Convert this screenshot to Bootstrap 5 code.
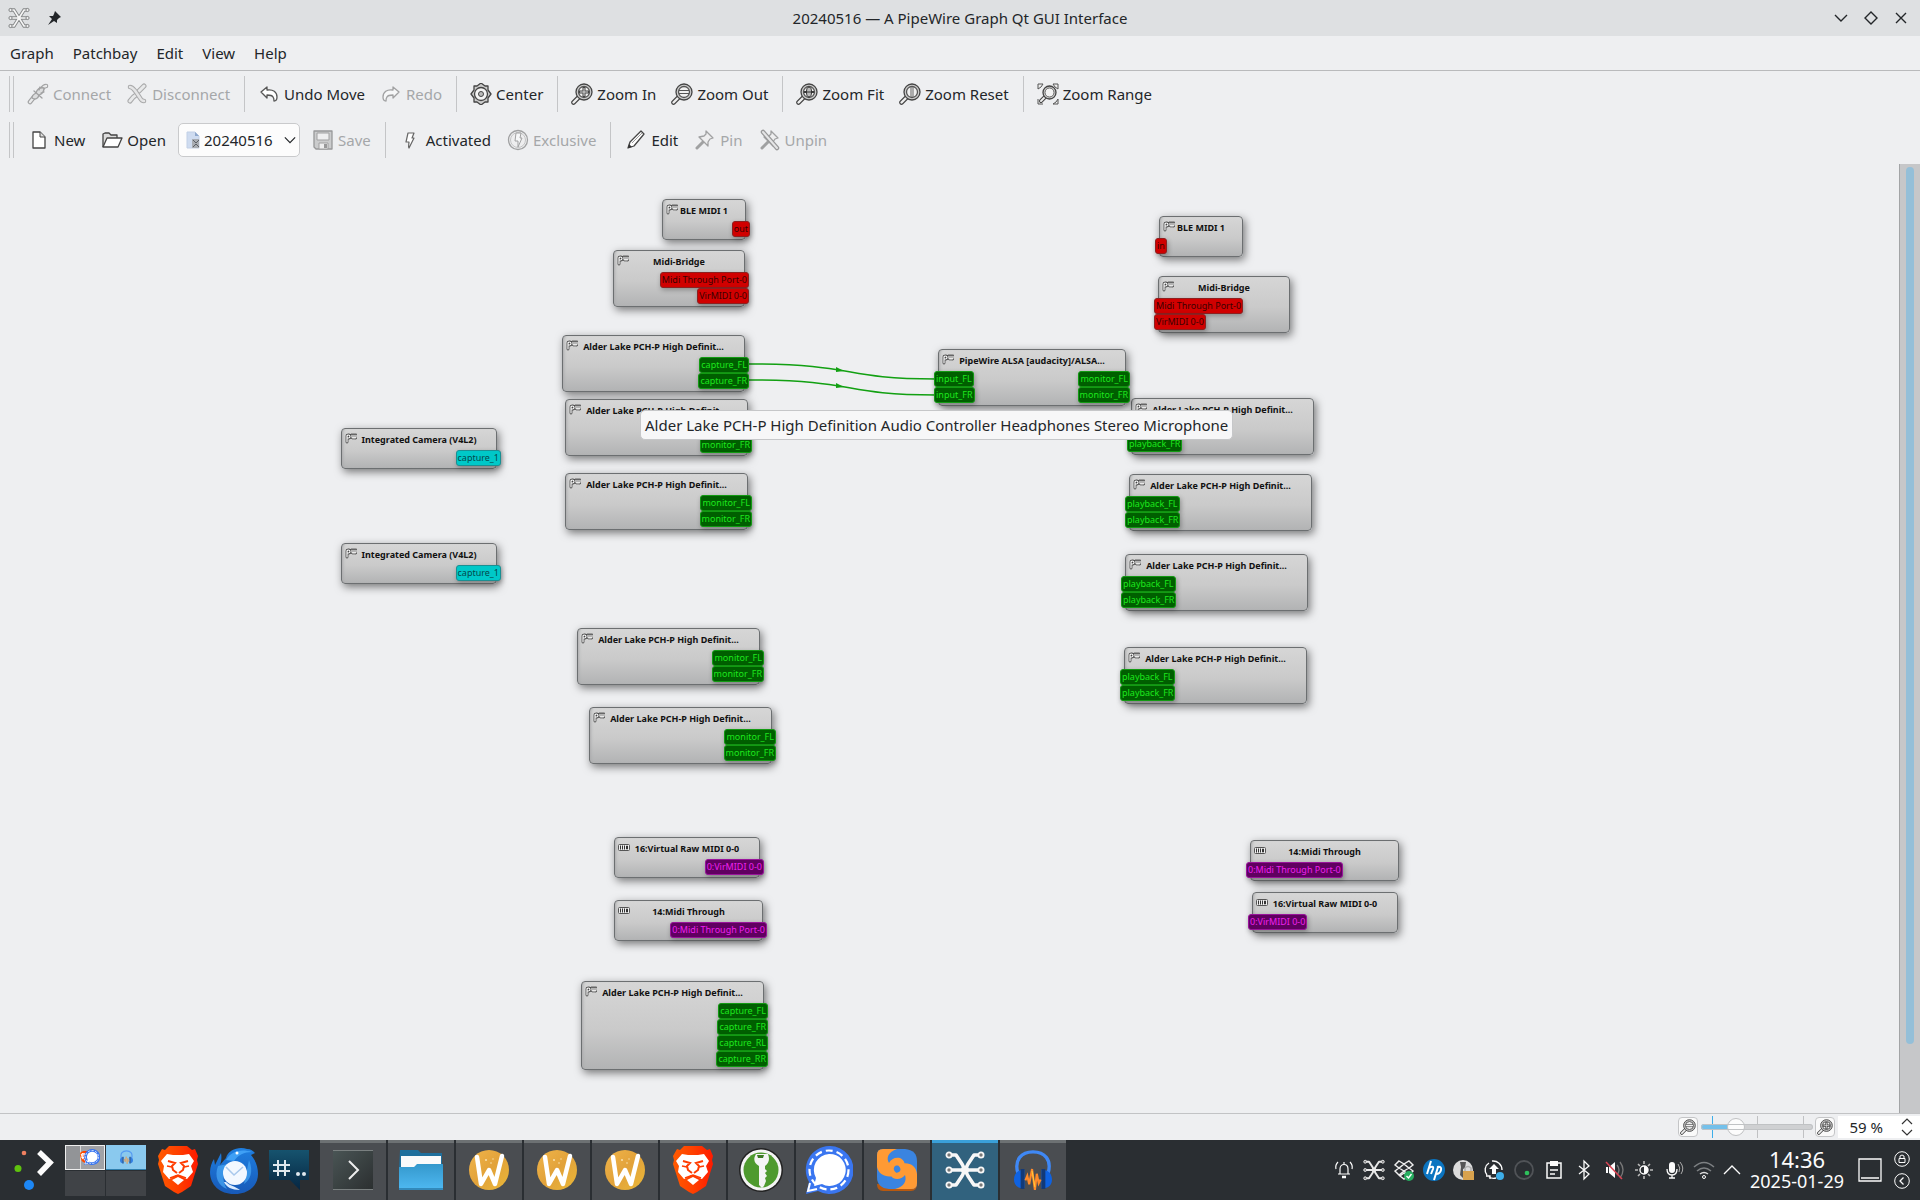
<!DOCTYPE html>
<html lang="en">
<head>
<meta charset="utf-8">
<meta name="viewport" content="width=device-width, initial-scale=1">
<title>20240516 — A PipeWire Graph Qt GUI Interface</title>
<link href="https://cdn.jsdelivr.net/npm/bootstrap@5.3.0/dist/css/bootstrap.min.css" rel="stylesheet">
<style>
:root{--win:#eeeff1;--ink:#232629;--dim:#a5a7a9;--line:#b9babc}
body{background:var(--win);color:var(--ink);font-family:"Noto Sans",sans-serif;font-size:15px;line-height:20px}
svg{display:block;flex:none}
.titlebar{background:#dee0e2;height:36px}
.winbtn{border:0;background:none;padding:0;width:30px;height:30px;display:grid;place-items:center;color:var(--ink)}
.menubar{height:35px;border-bottom:1px solid var(--line)}
.menubar a{color:var(--ink);text-decoration:none;padding:0 9px 0 10px}
.toolrow{height:45px;padding-left:9px}
.toolrow.patch{height:48px}
.grip{width:5px;height:36px;border:solid #c4c5c7;border-width:0 1px;margin-right:6px}
.vsep{width:1px;height:36px;background:#c4c5c7;margin:0 6px}
.tool{border:0;background:none;display:flex;align-items:center;gap:4px;padding:6px 8px 6px 7px;color:var(--ink);white-space:nowrap}
.patch .tool{padding-left:8px}
.tool:disabled{color:var(--dim)}
.tool:disabled svg{opacity:.5}
.combo{width:122px;margin:0 4px}
.combo select{appearance:none;width:100%;height:34px;border:1px solid #c9cacc;border-radius:5px;background:#fcfcfc;color:var(--ink);padding:0 4px 0 25px}
.combo .lead-ico{left:8px;top:8px}
.combo .drop-ico{right:4px;top:11px}
.canvas{overflow:hidden}
.wires{left:0;top:0;width:100%;height:100%}
.gnode{position:absolute;border:1px solid #6c6f71;border-radius:4px;background:linear-gradient(#d6d6d6,#cacaca 55%,#b2b3b4);box-shadow:inset 3px 0 3px -2px #aaabac,2px 3px 8px rgba(0,0,0,.5);padding-top:4px;font-size:9px;line-height:13px}
.gnode .gicon{position:absolute;left:3px;top:4px}
.gtitle{font-weight:700;text-align:center;white-space:nowrap;color:#111;margin-bottom:4px}
.gports{display:flex;justify-content:space-between;margin:0 -5px}
.gport{height:16px;line-height:14px;border:1px solid;border-radius:3px;padding:0 1px;white-space:nowrap;box-shadow:1px 2px 5px rgba(0,0,0,.3)}
.audio{background:#005f00;border-color:#139a13;color:#1ee61e}
.midi{background:#d00000;border-color:#8d2020;color:#3a0000}
.video{background:#00c8c8;border-color:#1b8f92;color:#04494c}
.alsa{background:#600060;border-color:#99149b;color:#ee22ee}
.tip{left:640px;top:246px;background:#f7f7f8;border:1px solid #c6c7c9;border-radius:5px;padding:4px;white-space:nowrap}
.vscroll{width:21px;background:#c6c7c9;border-left:1px solid #a2a4a6;padding:3px 6px}
.vthumb{width:8px;height:93%;border-radius:4px;background:#94bfd8}
.statusbar{height:27px;border-top:1px solid #c2c3c5}
.sqbtn{width:20px;height:20px;border:1px solid #c4c5c7;border-radius:4px;background:#fafafa;padding:0;display:grid;place-items:center}
.zoomer{width:112px;height:22px;margin:0 2px 0 3px}
.zoomer i{position:absolute;width:1px;top:0;height:22px;background:#c0c1c3}
.zoomer i:nth-child(1){left:10%;background:#3daee9}
.zoomer i:nth-child(2){left:50%}
.zoomer i:nth-child(3){left:91%}
.zoomer input{appearance:none;position:absolute;inset:0;width:100%;margin:0;background:none}
.zoomer input::-webkit-slider-runnable-track{height:6px;border-radius:3px;background:linear-gradient(90deg,#74c0ea 30%,#cfd0d2 30%);outline:1px solid #c0c2c4;outline-offset:-1px}
.zoomer input::-webkit-slider-thumb{appearance:none;width:18px;height:18px;border-radius:50%;margin-top:-6px;background:#fcfcfc;border:1px solid #c0c1c3}
.spin{width:82px;height:22px;background:#fff;margin-left:3px}
.spin input{width:63px;border:0;background:none;text-align:right;padding:0 18px 0 0;color:var(--ink)}
.taskbar{height:60px;background:#2a2e32;color:#fcfcfc}
.taskbar button{border:0;background:none;padding:0;color:inherit}
.starter{width:65px;height:60px}
.pager{width:81px;display:grid;grid-template-columns:40px 40px;gap:1px}
.pager span{height:25px;background:#404347;display:grid;place-items:center}
.pager .here{background:linear-gradient(90deg,#929497 14px,#d8d8d9 14px 15px,#a1a2a6 15px);border:1px solid #eee;justify-items:end;padding-right:4px}
.pager .busy{background:#8ac9ee;border-bottom:1px solid #2f7fae}
.pins button{display:grid;place-items:center;width:56px;height:60px}
.pins button:nth-child(3){width:54px}
.tasks{gap:2px}
.tasks button{width:66px;height:60px;background:#4a4d51;border-top:3px solid #6d7173;padding-bottom:3px;display:grid;place-items:center}
.tasks button.now{background:#31627e;border-top-color:#3aa0d9}
.tray{gap:8px}
.clock{line-height:22px;width:104px}
.clock .hour{font-size:22px}
.clock .day{font-size:18px}
.corner{gap:6px;width:37px}
</style>
</head>
<body class="min-vh-100 d-flex flex-column">

<svg width="0" height="0" class="position-absolute" aria-hidden="true">
<defs>
<linearGradient id="gBrave"><stop offset="0" stop-color="#ff5a00"/><stop offset=".5" stop-color="#ff4000"/><stop offset="1" stop-color="#ff1a00"/></linearGradient>
<linearGradient id="gW" x2="1" y2="1"><stop offset="0" stop-color="#f0b54a"/><stop offset=".5" stop-color="#e2a23a"/><stop offset="1" stop-color="#eab838"/></linearGradient>
<linearGradient id="gBird" x2="0" y2="1"><stop offset="0" stop-color="#1f7fe0"/><stop offset="1" stop-color="#1759b8"/></linearGradient>
<linearGradient id="gFold" x2="0" y2="1"><stop offset="0" stop-color="#3498cc"/><stop offset="1" stop-color="#4fb9f2"/></linearGradient>
<linearGradient id="gChat" x2="0" y2="1"><stop offset="0" stop-color="#16536e"/><stop offset="1" stop-color="#062642"/></linearGradient>
<linearGradient id="gTerm" x2="1" y2="1"><stop offset="0" stop-color="#4a5555"/><stop offset="1" stop-color="#2b2f30"/></linearGradient>
<symbol id="graph" viewBox="0 0 40 40"><path fill="none" stroke-linecap="round" stroke-linejoin="round" stroke="currentColor" stroke-width="3.600" d="M5 5h6l6 9 6 12 6 9h6M35 5h-6l-6 9-6 12-6 9H5M5 20h30"/><g fill="#777" stroke="currentColor" stroke-width="1.800"><circle cx="4" cy="5" r="2.600"/><circle cx="4" cy="20" r="2.600"/><circle cx="4" cy="35" r="2.600"/><circle cx="36" cy="5" r="2.600"/><circle cx="36" cy="20" r="2.600"/><circle cx="36" cy="35" r="2.600"/></g><circle cx="20" cy="20" r="4" fill="currentColor"/></symbol>
<symbol id="graphLine" viewBox="0 0 22 22"><g fill="none" stroke-linecap="round"><path stroke="#868889" stroke-width="3.400" d="M3 3h3l5 8 5 8h3M19 3h-3l-5 8-5 8H3M3 11h16"/><path stroke="#f6f6f6" stroke-width="1.600" d="M3 3h3l5 8 5 8h3M19 3h-3l-5 8-5 8H3M3 11h16"/></g><g fill="#eee" stroke="#868889"><circle cx="2.500" cy="3" r="1.600"/><circle cx="2.500" cy="11" r="1.600"/><circle cx="2.500" cy="19" r="1.600"/><circle cx="19.500" cy="3" r="1.600"/><circle cx="19.500" cy="11" r="1.600"/><circle cx="19.500" cy="19" r="1.600"/></g></symbol>
<symbol id="plug" viewBox="0 0 22 22"><g fill="none" stroke-linecap="round"><path stroke="#555" stroke-width="4.600" d="M3 19l4-5M15 6q2-3 4-3"/><path stroke="#e6e6e6" stroke-width="2.400" d="M3 19l4-5M15 6q2-3 4-3"/><path fill="#ccc" stroke="#555" stroke-width="1.300" d="M5 15c0-3 2-4 4-5 1-4 4-6 8-5 0 4-2 6-5 7-1 4-4 5-7 3z"/><path stroke="#555" stroke-width="1.300" d="M7 8l8 7M13 4l-1 3M17 9l-3 1"/></g></symbol>
<symbol id="unplug" viewBox="0 0 22 22"><g fill="none" stroke-linecap="round"><path stroke="#666" stroke-width="5" d="M4 18c2-3 4-5 6-6M13 8l5-5"/><path stroke="#e4e4e4" stroke-width="3" d="M4 18c2-3 4-5 6-6M13 8l5-5"/><path stroke="#666" stroke-width="4.500" d="M4 4c3 0 4 3 6 5l4 6c1 2 3 3 4 3"/><path stroke="#ddd" stroke-width="2.500" d="M4 4c3 0 4 3 6 5l4 6c1 2 3 3 4 3"/></g></symbol>
<symbol id="undo" viewBox="0 0 22 22"><path d="M3 9l6-5v3c6-1 10 2 10 7 0 2-1 4-3 4 0-2 0-3-1-4-1-2-3-2-6-2v3z" fill="#fff" stroke="#555" stroke-width="1.300" stroke-linejoin="round"/></symbol>
<symbol id="center" viewBox="0 0 22 22"><path d="M11 0l4 3h3v4l3 4-3 4v4h-3l-4 3-4-3H4v-4l-3-4 3-4V3h3z" fill="#ccc" stroke="#444" stroke-width="1.300" stroke-linejoin="round"/><circle cx="11" cy="11" r="6.500" fill="#f4f4f4" stroke="#444" stroke-width="1.300"/><circle cx="11" cy="11" r="2.500" fill="#bbb" stroke="#444"/></symbol>
<symbol id="lens" viewBox="0 0 22 22"><path d="M8 14l-5.500 5.500" stroke="#444" stroke-width="4.600" stroke-linecap="round"/><path d="M8 14l-5.500 5.500" stroke="#eee" stroke-width="2.400" stroke-linecap="round"/><circle cx="13" cy="9" r="8" fill="#ccc" stroke="#444" stroke-width="1.300"/><circle cx="13" cy="9" r="5.500" fill="#f0f0f0" stroke="#555" stroke-width="1.300"/></symbol>
<symbol id="zin" viewBox="0 0 22 22"><use href="#lens"/><path d="M13 4v10M8 9h10" stroke="#444" stroke-width="3"/><path d="M13 5v8M9 9h8" stroke="#ddd"/></symbol>
<symbol id="zout" viewBox="0 0 22 22"><use href="#lens"/><path d="M8 7.500h10M8 10.500h10" stroke="#555"/></symbol>
<symbol id="zfit" viewBox="0 0 22 22"><use href="#lens"/><path d="M8 9h10M13 4v10" stroke="#444" stroke-width="2"/><ellipse cx="13" cy="9" rx="2.500" ry="5" fill="#bbb" stroke="#333"/><path d="M8 9h10" stroke="#333"/></symbol>
<symbol id="zone" viewBox="0 0 22 22"><use href="#lens"/><path d="M12 4v10M14 4v10" stroke="#666"/></symbol>
<symbol id="zrange" viewBox="0 0 22 22"><path d="M1 6V1h5L4 4zM21 6V1h-5l2 3zM21 16v5h-5l3-2zM1 16v5h5" fill="#eee" stroke="#555" stroke-linejoin="round"/><path d="M8 14l-4 4" stroke="#444" stroke-width="4" stroke-linecap="round"/><path d="M8 14l-4 4" stroke="#eee" stroke-width="2" stroke-linecap="round"/><circle cx="12.500" cy="9.500" r="6.500" fill="#ccc" stroke="#444" stroke-width="1.300"/><circle cx="12.500" cy="9.500" r="4.500" fill="#f2f2f2" stroke="#666"/></symbol>
<symbol id="file" viewBox="0 0 22 22"><path d="M5 3h7l5 5v11H5z" fill="#fff" stroke="#444" stroke-width="1.300" stroke-linejoin="round"/><path d="M12 3v5h5" fill="#ddd" stroke="#444"/></symbol>
<symbol id="folder" viewBox="0 0 22 22"><path d="M2 18V5l2-1h4l2 2h6v3" fill="#ddd" stroke="#444" stroke-width="1.300" stroke-linejoin="round"/><path d="M2 18L6 9h15l-4 9z" fill="#fff" stroke="#444" stroke-width="1.300" stroke-linejoin="round"/></symbol>
<symbol id="disk" viewBox="0 0 22 22"><path d="M2 2h18v18H4l-2-2z" fill="#aaa" stroke="#444" stroke-width="1.300" stroke-linejoin="round"/><path d="M5 4h12v7H5zM7 14h9v6H7z" fill="#eee" stroke="#555"/><path d="M12 15h3v4h-3z" fill="#444"/></symbol>
<symbol id="bolt" viewBox="0 0 22 22"><path d="M8 4h6l-2 5h2l-5 10c-1-2 0-4 0-6H6z" fill="#fff" stroke="#666" stroke-width="1.200" stroke-linejoin="round"/></symbol>
<symbol id="excl" viewBox="0 0 22 22"><circle cx="11" cy="11" r="9.500" fill="#f4f4f4" stroke="#555" stroke-width="1.300"/><circle cx="11" cy="11" r="7.500" fill="#eee" stroke="#999"/><path d="M9 4h5l-1 5h2l-4 9v-6H8z" fill="#fff" stroke="#555" stroke-linejoin="round"/></symbol>
<symbol id="pencil" viewBox="0 0 22 22"><path d="M3 19l2-6L16 2l3 3L9 17z" fill="#fff" stroke="#444" stroke-width="1.300" stroke-linejoin="round"/><path d="M3 19l1-4 3 3z" fill="#333"/><path d="M7 14L17 4" stroke="#999"/></symbol>
<symbol id="pin" viewBox="0 0 22 22"><path d="M9 13l-6 6" stroke="#555" stroke-width="3" stroke-linecap="round"/><path d="M12 2l7 7-3 1-2 3v4L5 8l5-1 2-2z" fill="#eee" stroke="#555" stroke-width="1.300" stroke-linejoin="round"/></symbol>
<symbol id="unpin" viewBox="0 0 22 22"><use href="#pin"/><path d="M4 3l14 16" stroke="#444" stroke-width="4.500" stroke-linecap="round"/><path d="M4 3l14 16" stroke="#ddd" stroke-width="2" stroke-linecap="round"/></symbol>
<symbol id="pw" viewBox="0 0 12 11"><g fill="none" stroke-linecap="round" stroke-linejoin="round"><path stroke="#444" stroke-width="2.800" d="M2 9V3q0-1 1.500-1T5 3.500 3.500 5H2M7 2v2q0 1 1 1t1-1V2v2q0 1 1 1t1-1V2"/><path stroke="#fff" stroke-width="1.200" d="M2 9V3q0-1 1.500-1T5 3.500 3.500 5H2M7 2v2q0 1 1 1t1-1V2v2q0 1 1 1t1-1V2"/></g></symbol>
<symbol id="din" viewBox="0 0 12 11"><rect x=".5" y="2.500" width="11" height="6" rx="1" fill="#eee" stroke="#555"/><path d="M2.500 7.500v-4M4.500 7.500v-4M6.500 7.500v-4M8.500 4h1v3h-1z" fill="none" stroke="#333"/></symbol>
<symbol id="down" viewBox="0 0 14 14"><path d="M1 4l6 6 6-6" fill="none" stroke="currentColor" stroke-width="1.400"/></symbol>
<symbol id="brave" viewBox="0 0 40 48"><path d="M11 0h18l5 4 3-1 3 7-1 4 1 4-7 22-9 6-4 2-4-2-9-6L0 18l1-4-1-4 4-7 3 1z" fill="url(#gBrave)"/><path d="M9 8l6 1h10l6-1 5 7-3 5 2 6-6 7-3-1-5-3-3 0-4 3-3 1-6-7 1-6-3-5z" fill="#fff"/><path d="M20 31l6 3-6 5-6-5z" fill="#fff"/><path d="M10 15l7 2-3 3 1 4 4 3M30 15l-7 2 3 3-1 4-4 3" fill="none" stroke="#ff3c00" stroke-width="2"/><path d="M9 20l5 1M31 20l-5 1M12 32l8-3 8 3" fill="none" stroke="#ff3c00" stroke-width="1.600"/></symbol>
<symbol id="wico" viewBox="0 0 40 40"><circle cx="20" cy="20" r="20" fill="url(#gW)"/><path d="M8 7l4 27 8-14 6 14 7-28" fill="none" stroke="#fff" stroke-width="4.500" stroke-linecap="round" stroke-linejoin="round"/><g fill="#f9e2b0"><circle cx="17" cy="10" r="1"/><circle cx="22" cy="13" r=".8"/><circle cx="24" cy="9" r=".7"/></g></symbol>
<symbol id="signal" viewBox="0 0 48 48"><path d="M24 0a24 24 0 1 1-11 45L1 48l3-12A24 24 0 0 1 24 0z" fill="#3a76f0"/><circle cx="24" cy="24" r="19.500" fill="none" stroke="#fff" stroke-width="2.200" stroke-dasharray="7 4"/><path d="M5 37l-2 8 9-2" fill="none" stroke="#fff" stroke-width="2"/><path d="M24 8a16 16 0 1 1-7 30l-8 2 2-8A16 16 0 0 1 24 8z" fill="#fff"/></symbol>
<symbol id="phones" viewBox="0 0 40 42"><path d="M4 24C0 10 8 2 20 2s20 8 16 22" fill="none" stroke="#3f88f5" stroke-width="3.500"/><path d="M11 21v19C4 41 0 37 0 31s4-11 11-10zM29 21v19c7 1 11-3 11-9s-4-11-11-10z" fill="#0f62e0"/><path d="M7 20h4v21H7zM29 20h4v21h-4z" fill="#123a78"/><path d="M12 32l2-5 2 9 3-16 3 22 2-17 2 10 2-4" fill="none" stroke="#ff8a2a" stroke-width="2.200"/><path d="M19 22l3 17" stroke="#ffd23a"/></symbol>
</defs>
</svg>

<header class="titlebar d-flex align-items-center">
  <div class="d-flex align-items-center gap-3 flex-fill w-25 ps-2">
    <svg width="22" height="22"><use href="#graphLine"/></svg>
    <svg class="me-auto" width="16" height="16" viewBox="0 0 16 16"><path d="M9 1l6 6-2 1-2 2v3L8 11l-6 4 4-6-3-3h4l1-2z" fill="#232629"/></svg>
  </div>
  <div>20240516 — A PipeWire Graph Qt GUI Interface</div>
  <div class="d-flex justify-content-end flex-fill w-25 pe-1">
    <button class="winbtn" aria-label="Minimize"><svg width="14" height="14"><use href="#down"/></svg></button>
    <button class="winbtn" aria-label="Maximize"><svg width="14" height="14" viewBox="0 0 14 14"><path d="M7 1l6 6-6 6-6-6z" fill="none" stroke="currentColor" stroke-width="1.400"/></svg></button>
    <button class="winbtn" aria-label="Close"><svg width="14" height="14" viewBox="0 0 14 14"><path d="M2 2l10 10M12 2L2 12" stroke="currentColor" stroke-width="1.400"/></svg></button>
  </div>
</header>

<nav class="menubar d-flex align-items-center" aria-label="Menu">
  <a href="#">Graph</a><a href="#">Patchbay</a><a href="#">Edit</a><a href="#">View</a><a href="#">Help</a>
</nav>

<div class="toolrow d-flex align-items-center" role="toolbar" aria-label="Graph tools">
  <span class="grip"></span>
  <button class="tool" disabled><svg width="22" height="22"><use href="#plug"/></svg>Connect</button>
  <button class="tool" disabled><svg width="22" height="22"><use href="#unplug"/></svg>Disconnect</button>
  <span class="vsep"></span>
  <button class="tool"><svg width="22" height="22"><use href="#undo"/></svg>Undo Move</button>
  <button class="tool" disabled><svg width="22" height="22" viewBox="0 0 22 22"><g transform="matrix(-1 0 0 1 22 0)"><use href="#undo"/></g></svg>Redo</button>
  <span class="vsep"></span>
  <button class="tool"><svg width="22" height="22"><use href="#center"/></svg>Center</button>
  <span class="vsep"></span>
  <button class="tool"><svg width="22" height="22"><use href="#zin"/></svg>Zoom In</button>
  <button class="tool"><svg width="22" height="22"><use href="#zout"/></svg>Zoom Out</button>
  <span class="vsep"></span>
  <button class="tool"><svg width="22" height="22"><use href="#zfit"/></svg>Zoom Fit</button>
  <button class="tool"><svg width="22" height="22"><use href="#zone"/></svg>Zoom Reset</button>
  <span class="vsep"></span>
  <button class="tool"><svg width="22" height="22"><use href="#zrange"/></svg>Zoom Range</button>
</div>

<div class="toolrow patch d-flex align-items-center" role="toolbar" aria-label="Patchbay tools">
  <span class="grip"></span>
  <button class="tool"><svg width="22" height="22"><use href="#file"/></svg>New</button>
  <button class="tool"><svg width="22" height="22"><use href="#folder"/></svg>Open</button>
  <div class="combo position-relative">
    <select aria-label="Patchbay profile"><option>20240516</option></select>
    <svg class="lead-ico position-absolute pe-none" width="14" height="18" viewBox="0 0 14 18"><path d="M1 1h8l4 4v12H1z" fill="#cfdcf0" stroke="#c2d0e6"/><path d="M9 1v4h4" fill="#8fa8cc"/><path d="M6 8h7v9H6z" fill="#a9adb3"/><path d="M7 9l3 3 3-3M7 16l3-3 3 3" stroke="#5c6066" fill="none"/></svg>
    <svg class="drop-ico position-absolute pe-none" width="12" height="12"><use href="#down"/></svg>
  </div>
  <button class="tool" disabled><svg width="22" height="22"><use href="#disk"/></svg>Save</button>
  <span class="vsep"></span>
  <button class="tool"><svg width="22" height="22"><use href="#bolt"/></svg>Activated</button>
  <button class="tool" disabled><svg width="22" height="22"><use href="#excl"/></svg>Exclusive</button>
  <span class="vsep"></span>
  <button class="tool"><svg width="22" height="22"><use href="#pencil"/></svg>Edit</button>
  <button class="tool" disabled><svg width="22" height="22"><use href="#pin"/></svg>Pin</button>
  <button class="tool" disabled><svg width="22" height="22"><use href="#unpin"/></svg>Unpin</button>
</div>

<main class="d-flex flex-fill">
  <div class="canvas position-relative flex-fill" id="canvas">
    <svg class="wires position-absolute" aria-hidden="true"><g fill="none" stroke="#12a012" stroke-width="1.500"><path d="M749 200c110 0 90 15 187 15M749 216c110 0 90 15 187 15"/></g><path d="M836 203l8 4-8 1zM836 219l8 4-8 1z" fill="#12a012"/></svg>
    <div class="tip position-absolute z-1" role="tooltip">Alder Lake PCH-P High Definition Audio Controller Headphones Stereo Microphone</div>
  </div>
  <div class="vscroll"><div class="vthumb"></div></div>
</main>

<footer class="statusbar d-flex align-items-center justify-content-end">
  <button class="sqbtn" aria-label="Zoom out"><svg width="16" height="16"><use href="#zout"/></svg></button>
  <div class="zoomer position-relative"><i></i><i></i><i></i><input type="range" aria-label="Zoom" min="0" max="100" value="28"></div>
  <button class="sqbtn" aria-label="Zoom in"><svg width="16" height="16"><use href="#zin"/></svg></button>
  <div class="spin d-flex align-items-center"><input type="text" aria-label="Zoom percent" value="59 %"><svg width="12" height="20" viewBox="0 0 12 20"><path d="M1 7l5-5 5 5M1 13l5 5 5-5" fill="none" stroke="#333" stroke-width="1.200"/></svg></div>
</footer>

<div class="taskbar d-flex align-items-center">
  <button class="starter" aria-label="Application launcher"><svg width="65" height="60" viewBox="0 0 65 60"><circle cx="24" cy="13" r="2.300" fill="#f08060"/><circle cx="18" cy="28.500" r="3.500" fill="#5fc20e"/><circle cx="29" cy="45" r="5" fill="#1d87f5"/><path d="M39 12l11 10.500L39 34" fill="none" stroke="#fcfcfc" stroke-width="5.500"/></svg></button>
  <div class="pager"><span class="here"><svg width="20" height="16" viewBox="0 0 20 16"><use href="#brave" width="10" height="14" y="1"/><use href="#signal" width="16" height="16" x="4"/></svg></span><span class="busy"><svg width="13" height="14" opacity=".7"><use href="#phones"/></svg></span><span></span><span></span></div>
  <div class="pins d-flex ps-1">
    <button aria-label="Brave"><svg width="40" height="48"><use href="#brave"/></svg></button>
    <button aria-label="Thunderbird"><svg width="48" height="48" viewBox="0 0 48 48"><path d="M16 12C18 3 30 0 37 3c4 0 6 2 8 4l-4 2c5 6 7 12 7 19 0 12-10 20-24 20S0 39 0 26c0-5 2-10 4-13l1 6 6-12c1 5 0 9-1 12z" fill="url(#gBird)"/><path d="M16 14C22 4 32 3 42 6c-8 0-14 3-18 9z" fill="#3fa0f5"/><path d="M8 20c-4 10 0 20 9 23-5-8-5-18 1-25zM39 14c5 12 1 20-5 24" fill="#48a8f5" opacity=".7"/><circle cx="25" cy="27" r="12" fill="#f3f8ff"/><path d="M16 21l8 8 9-8" fill="none" stroke="#a9c8ec" stroke-width="1.500"/><path d="M16 36c4 4 9 4 14 8-8 0-14-3-16-8z" fill="#dcecff"/><circle cx="27" cy="7" r="1.500" fill="#fff"/></svg></button>
    <button aria-label="Konversation"><svg width="40" height="42" viewBox="0 0 40 42"><path d="M0 1h40v30h-9v10L21 31H0z" fill="url(#gChat)"/><path d="M9 11v16M16 11v16M4 16h17M4 22h17" stroke="#dfe8ee" stroke-width="2"/><circle cx="29" cy="25" r="2" fill="#dfe8ee"/><circle cx="35" cy="25" r="2" fill="#dfe8ee"/></svg></button>
  </div>
  <div class="tasks d-flex ms-1">
    <button aria-label="Terminal"><svg width="40" height="40" viewBox="0 0 40 40"><path d="M0 0h40v40H0z" fill="url(#gTerm)"/><path d="M0 .5h40M0 39.500h40" stroke="#7a8080"/><path d="M16 11l9 9-9 9" fill="none" stroke="#eee" stroke-width="2"/></svg></button>
    <button aria-label="Files"><svg width="44" height="40" viewBox="0 0 44 40"><path d="M1 0h18l3 3h21v16H0z" fill="#1f6f9c"/><path d="M2 6h40v12H2z" fill="#fafafa"/><path d="M0 17h15l3-3h26v26H0z" fill="url(#gFold)"/><path d="M0 39h44" stroke="#2a7aa8" stroke-width="1.500"/></svg></button>
    <button aria-label="Window 1"><svg width="40" height="40"><use href="#wico"/></svg></button>
    <button aria-label="Window 2"><svg width="40" height="40"><use href="#wico"/></svg></button>
    <button aria-label="Window 3"><svg width="40" height="40"><use href="#wico"/></svg></button>
    <button aria-label="Brave window"><svg width="40" height="48"><use href="#brave"/></svg></button>
    <button aria-label="KeePassXC"><svg width="44" height="44" viewBox="0 0 44 44"><circle cx="22" cy="22" r="22" fill="#222"/><circle cx="22" cy="22" r="20.500" fill="#f4f4f4"/><circle cx="22" cy="22" r="17.500" fill="#4e9a2e"/><path d="M15 6h14c2 5 1 9-3 12v3l2 2-2 2 2 3-2 2 1 3-2 5-2 2-3-3V18c-5-3-6-7-3-12z" fill="#f4f4f4"/><path d="M18 7h7l-1 3h-5z" fill="#3c7a24"/></svg></button>
    <button aria-label="Signal"><svg width="48" height="48"><use href="#signal"/></svg></button>
    <button aria-label="Swirl"><svg width="40" height="42" viewBox="0 0 40 42"><path d="M0 35h40q0 7-6 7H6q-6 0-6-7z" fill="#b8590f"/><path d="M6 0h22q12 1 12 12v22q0 6-6 6H12Q0 39 0 28V6q0-6 6-6z" fill="#3a84e0"/><path d="M0 6Q0 0 6 0h14C11 3 9 9 12 14c2-4 6-6 11-5 5 2 6 8 3 12-1-4-5-6-8-4-3 3 0 7 4 8-10 5-20 2-22-7zM40 34q0 6-6 6H18c9-2 12-8 10-14-3 4-8 5-12 3-4-3-4-8-1-11 0 4 3 7 7 5 3-2 1-6-2-7 10-4 19-1 20 9z" fill="#ff9a34"/></svg></button>
    <button class="now" aria-label="Graph window"><svg width="40" height="40" color="#f7f7f7"><use href="#graph"/></svg></button>
    <button aria-label="Audacity"><svg width="38" height="42"><use href="#phones"/></svg></button>
  </div>
  <div class="tray d-flex align-items-center ms-auto">
    <svg width="22" height="22" viewBox="0 0 22 22" fill="none" stroke="#fcfcfc" stroke-width="1.200"><path d="M5 15h12M7 15v-5c0-6 8-6 8 0v5M11 3v2M5 3Q2 6 3 10M17 3q3 3 2 7"/><path d="M9 18h4" stroke-width="2.500"/></svg>
    <svg width="22" height="22" color="#e8e8e8"><use href="#graph"/></svg>
    <svg width="22" height="22" viewBox="0 0 22 22"><path d="M6 2l5 3-5 4-4-3zM16 2l4 4-4 3-5-4zM6 9l5 3-5 4-4-4zM16 9l4 3-4 4-5-4zM7 17l4-3 4 3-4 3z" fill="none" stroke="#eee" stroke-width="1.400"/><circle cx="16" cy="17" r="5" fill="#27ae60"/><path d="M13.500 17l2 2 3-4" fill="none" stroke="#fff" stroke-width="1.400"/></svg>
    <svg width="22" height="22" viewBox="0 0 22 22"><circle cx="11" cy="11" r="11" fill="#0b74c0"/><path d="M8 2L4 15M6 9q5-3 4 1l-2 5M15 8l-4 13M14 8q5-1 4 3t-5 4" fill="none" stroke="#fff" stroke-width="2"/></svg>
    <svg width="22" height="22" viewBox="0 0 22 22"><circle cx="10" cy="11" r="10" fill="#dcdcdc"/><path d="M7 3h6l-1 6-2 1v9l-3-3 1-8z" fill="#555"/><path d="M10 12h11v9H10z" fill="#d8a24e"/><path d="M12 12V9q3-3 6 0v3" fill="none" stroke="#b0b0b0" stroke-width="1.500"/></svg>
    <svg width="22" height="22" viewBox="0 0 22 22"><path d="M4 16a8 8 0 0 1 2-12M9 2a9 9 0 0 1 10 9M3 17h4v3M6 18q3 2 7 1" fill="none" stroke="#fcfcfc" stroke-width="1.400"/><path d="M11 5l5 5h-3v5H9v-5H6z" fill="#fcfcfc"/><circle cx="17" cy="17" r="4" fill="#3daee9"/></svg>
    <svg width="22" height="22" viewBox="0 0 22 22"><circle cx="11" cy="11" r="9" fill="none" stroke="#505357" stroke-width="1.800"/><circle cx="14" cy="14" r="2.300" fill="#2ec05c"/></svg>
    <svg width="22" height="22" viewBox="0 0 22 22"><path d="M4 4h14v15H4zM7 11h8M7 15h5" fill="none" stroke="#fcfcfc" stroke-width="1.500"/><path d="M7 2h8v5H7z" fill="#fcfcfc"/></svg>
    <svg width="22" height="22" viewBox="0 0 22 22"><path d="M6 7l10 8-5 5V2l5 5-10 8" fill="none" stroke="#fcfcfc" stroke-width="1.300"/></svg>
    <svg width="22" height="22" viewBox="0 0 22 22"><path d="M3 8h2v6H3zM6 8l6-5v16l-6-5z" fill="#fcfcfc"/><path d="M14 6q4 5 0 10M17 3q6 8 0 16" fill="none" stroke="#777" stroke-width="1.300"/><path d="M3 3l16 17" stroke="#da4453" stroke-width="1.500"/></svg>
    <svg width="22" height="22" viewBox="0 0 22 22"><circle cx="11" cy="11" r="4" fill="none" stroke="#fcfcfc" stroke-width="1.400"/><path d="M11 7a4 4 0 0 1 0 8z" fill="#fcfcfc"/><path d="M11 2v3M11 17v3M2 11h3M17 11h3M5 5l2 2M15 15l2 2M17 5l-2 2M7 15l-2 2" stroke="#bbb" stroke-width="1.600"/></svg>
    <svg width="22" height="22" viewBox="0 0 22 22"><rect x="6" y="3" width="6" height="11" rx="3" fill="#fcfcfc"/><path d="M4 10q0 6 5 6t5-6M9 16v3M6 19h6" fill="none" stroke="#fcfcfc" stroke-width="1.300"/><path d="M15 5q3 4 1 8M17 3q5 6 1 12" fill="none" stroke="#aaa"/></svg>
    <svg width="22" height="22" viewBox="0 0 22 22"><g fill="none" stroke="#7d8083" stroke-width="1.500"><path d="M1 8q10-9 20 0M4 12q7-6 14 0"/><path d="M7 15q4-3 8 0" stroke="#ddd"/></g><circle cx="11" cy="18" r="1.500" fill="none" stroke="#fcfcfc"/></svg>
    <svg width="18" height="18" viewBox="0 0 18 18"><path d="M1 13l8-8 8 8" fill="none" stroke="#fcfcfc" stroke-width="1.300"/></svg>
  </div>
  <div class="clock text-center ms-1"><div class="hour">14:36</div><div class="day">2025-01-29</div></div>
  <button class="ms-2" aria-label="Show desktop"><svg width="26" height="26" viewBox="0 0 26 26"><path d="M2 2h22v22H2zM4 21h18" fill="none" stroke="#fcfcfc" stroke-width="1.300"/></svg></button>
  <div class="corner d-flex flex-column align-items-center">
    <svg width="16" height="16" viewBox="0 0 16 16" fill="none" stroke="#fcfcfc"><circle cx="8" cy="8" r="7.300"/><path d="M5 7.500h6v4H5zM6 7V5q2-2 4 0v2"/></svg>
    <svg width="16" height="16" viewBox="0 0 16 16" fill="none" stroke="#fcfcfc"><circle cx="8" cy="8" r="7.300"/><path d="M9.500 4.500L6 8l3.500 3.500" stroke-width="1.300"/></svg>
  </div>
</div>

<script src="https://cdn.jsdelivr.net/npm/bootstrap@5.3.0/dist/js/bootstrap.bundle.min.js"></script>
<script>
// Graph nodes: position on the canvas, width, title, port kind, input ports, output ports.
const card = 'Alder Lake PCH-P High Definit...';
const mon = ['monitor_FL', 'monitor_FR'], play = ['playback_FL', 'playback_FR'];
const nodes = [
  [662, 35, 84, 'BLE MIDI 1', 'midi', [], ['out']],
  [613, 86, 132, 'Midi-Bridge', 'midi', [], ['Midi Through Port-0', 'VirMIDI 0-0']],
  [562, 171, 183, card, 'audio', [], ['capture_FL', 'capture_FR']],
  [565, 235, 183, card, 'audio', [], mon],
  [565, 309, 183, card, 'audio', [], mon],
  [341, 264, 156, 'Integrated Camera (V4L2)', 'video', [], ['capture_1']],
  [341, 379, 156, 'Integrated Camera (V4L2)', 'video', [], ['capture_1']],
  [577, 464, 183, card, 'audio', [], mon],
  [589, 543, 183, card, 'audio', [], mon],
  [614, 673, 146, '16:Virtual Raw MIDI 0-0', 'alsa', [], ['0:VirMIDI 0-0']],
  [614, 736, 149, '14:Midi Through', 'alsa', [], ['0:Midi Through Port-0']],
  [581, 817, 183, card, 'audio', [], ['capture_FL', 'capture_FR', 'capture_RL', 'capture_RR']],
  [1159, 52, 84, 'BLE MIDI 1', 'midi', ['in'], []],
  [1158, 112, 132, 'Midi-Bridge', 'midi', ['Midi Through Port-0', 'VirMIDI 0-0'], []],
  [1131, 234, 183, card, 'audio', play, []],
  [938, 185, 188, 'PipeWire ALSA [audacity]/ALSA...', 'audio', ['input_FL', 'input_FR'], mon],
  [1129, 310, 183, card, 'audio', play, []],
  [1125, 390, 183, card, 'audio', play, []],
  [1124, 483, 183, card, 'audio', play, []],
  [1250, 676, 149, '14:Midi Through', 'alsa', ['0:Midi Through Port-0'], []],
  [1252, 728, 146, '16:Virtual Raw MIDI 0-0', 'alsa', ['0:VirMIDI 0-0'], []]
];
const canvas = document.getElementById('canvas');
const column = (kind, ports, side) =>
  `<div class="d-flex flex-column align-items-${side}">` + ports.map(p => `<span class="gport ${kind}">${p}</span>`).join('') + '</div>';
for (const [x, y, w, title, kind, ins, outs] of nodes) {
  const el = document.createElement('div');
  el.className = 'gnode';
  el.style.cssText = `left:${x}px;top:${y}px;width:${w}px;height:${25 + 16 * Math.max(ins.length, outs.length)}px`;
  el.innerHTML = `<svg class="gicon" width="12" height="11"><use href="#${kind === 'alsa' ? 'din' : 'pw'}"/></svg>
    <div class="gtitle">${title}</div><div class="gports">${column(kind, ins, 'start')}${column(kind, outs, 'end')}</div>`;
  canvas.insertBefore(el, canvas.querySelector('.tip'));
}
</script>
</body>
</html>
